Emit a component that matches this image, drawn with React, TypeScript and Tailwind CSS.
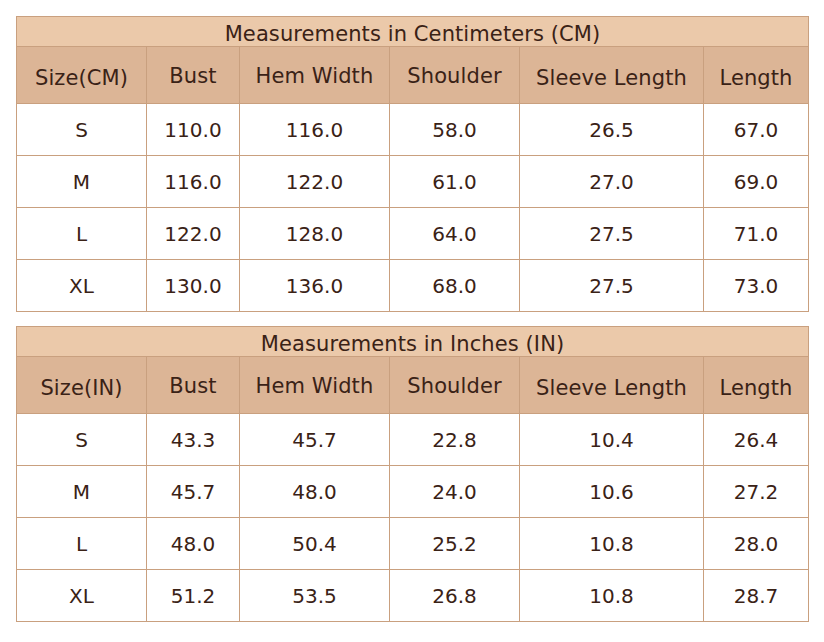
const cols = ["w-[130px]", "w-[93px]", "w-[150px]", "w-[130px]", "w-[184px]", "w-[105px]"];

type Table = {
  title: string;
  sizeLabel: string;
  rows: string[][];
};

const tables: Table[] = [
  {
    title: "Measurements in Centimeters (CM)",
    sizeLabel: "Size(CM)",
    rows: [
      ["S", "110.0", "116.0", "58.0", "26.5", "67.0"],
      ["M", "116.0", "122.0", "61.0", "27.0", "69.0"],
      ["L", "122.0", "128.0", "64.0", "27.5", "71.0"],
      ["XL", "130.0", "136.0", "68.0", "27.5", "73.0"],
    ],
  },
  {
    title: "Measurements in Inches (IN)",
    sizeLabel: "Size(IN)",
    rows: [
      ["S", "43.3", "45.7", "22.8", "10.4", "26.4"],
      ["M", "45.7", "48.0", "24.0", "10.6", "27.2"],
      ["L", "48.0", "50.4", "25.2", "10.8", "28.0"],
      ["XL", "51.2", "53.5", "26.8", "10.8", "28.7"],
    ],
  },
];

function SizeTable({ table }: { table: Table }) {
  const headers = [table.sizeLabel, "Bust", "Hem Width", "Shoulder", "Sleeve Length", "Length"];
  // Bust / Hem Width / Shoulder sit a few px higher in the original
  const raised = [false, true, true, true, false, false];

  return (
    <div className="w-[793px] border-l border-t border-[#c9a07f]">
      <div className="flex h-[30px] items-center justify-center border-b border-r border-[#c9a07f] bg-[#ebc9aa] pt-[6px] text-[21px] tracking-[0.1px]">
        {table.title}
      </div>
      <div className="flex">
        {headers.map((h, i) => (
          <div
            key={h}
            className={`${cols[i]} flex h-[57px] items-center justify-center border-b border-r border-[#c9a07f] bg-[#dcb596] text-[21px] tracking-[0.1px] ${
              raised[i] ? "pt-[3px]" : "pt-[8px]"
            }`}
          >
            {h}
          </div>
        ))}
      </div>
      {table.rows.map((row) => (
        <div key={row[0]} className="flex">
          {row.map((cell, i) => (
            <div
              key={i}
              className={`${cols[i]} flex h-[52px] items-center justify-center border-b border-r border-[#c9a07f] bg-white`}
            >
              {cell}
            </div>
          ))}
        </div>
      ))}
    </div>
  );
}

export default function App() {
  return (
    <div className="flex min-h-[642px] w-[824px] flex-col gap-[14px] bg-white px-4 pt-4 font-['DejaVu_Sans',sans-serif] text-[20px] text-[#3a2216]">
      {tables.map((t) => (
        <SizeTable key={t.title} table={t} />
      ))}
    </div>
  );
}
